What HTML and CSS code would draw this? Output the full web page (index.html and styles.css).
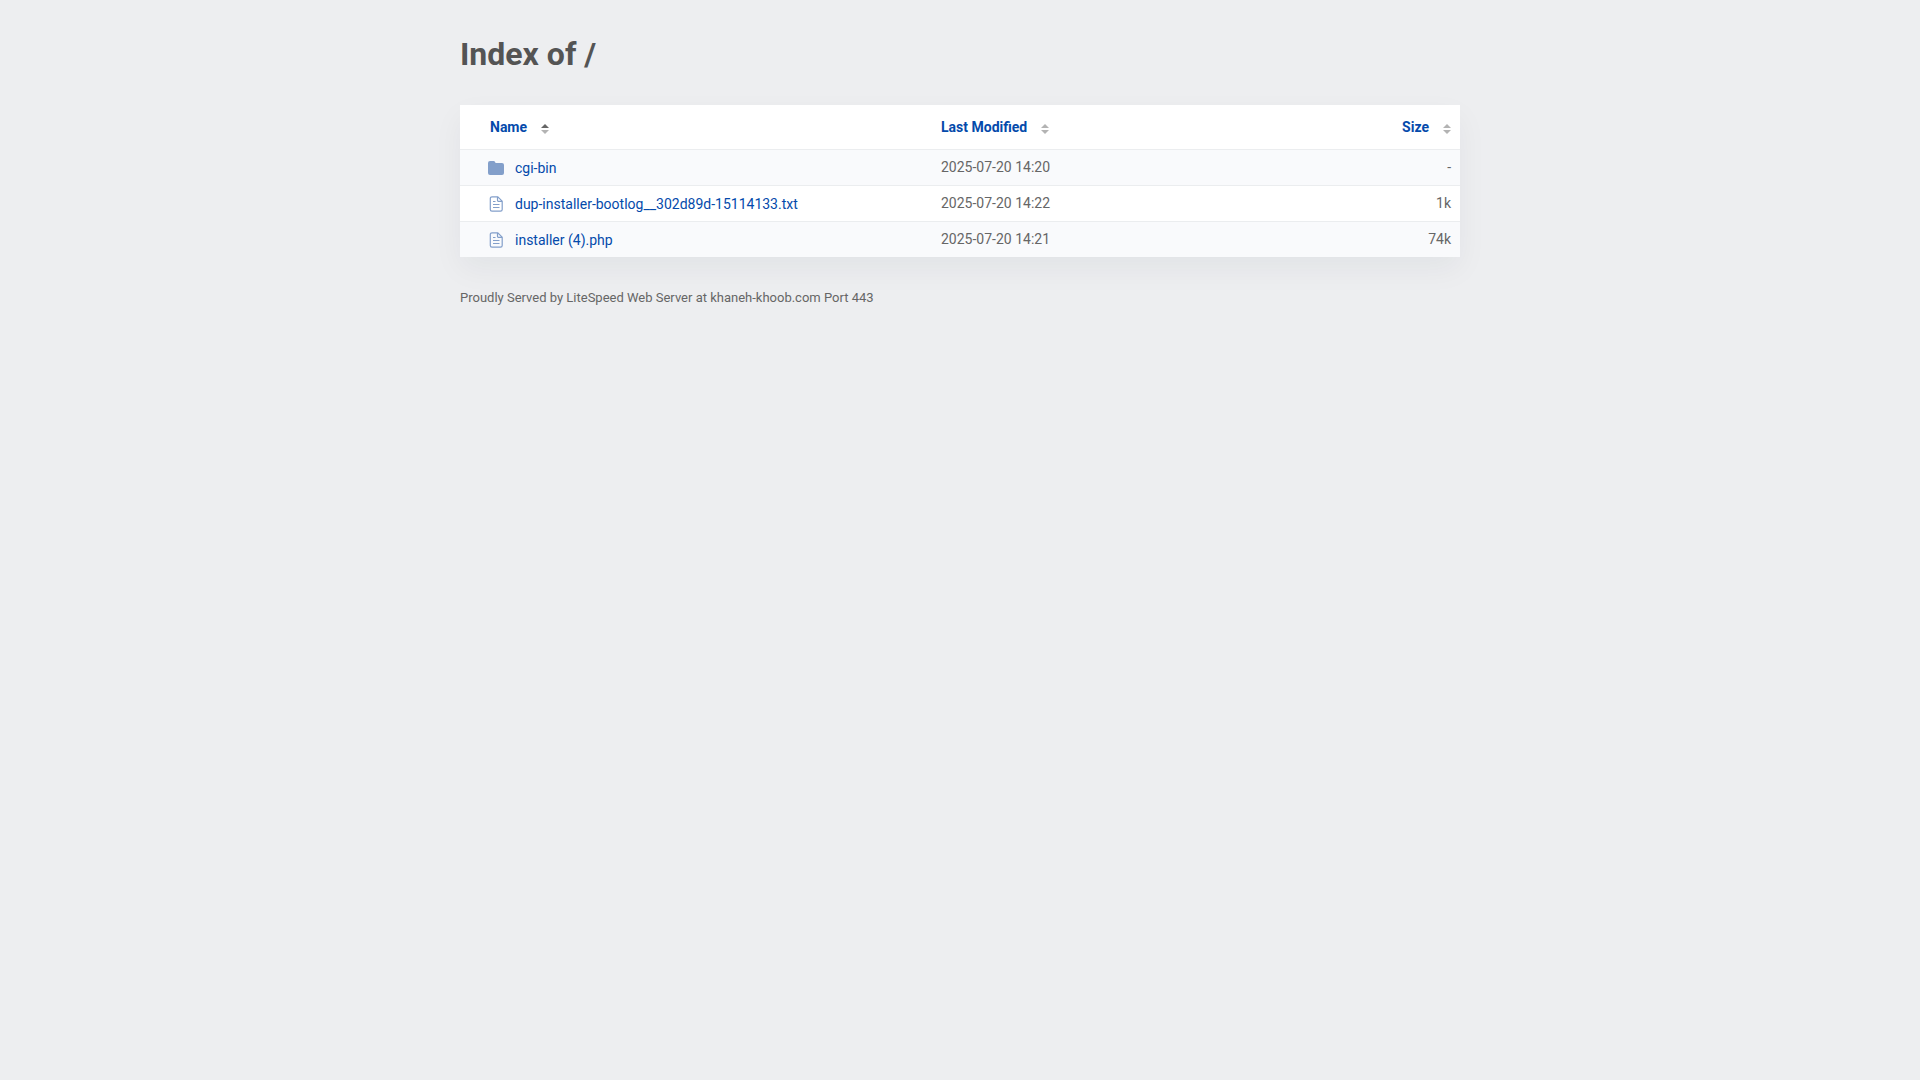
FILE: index.html
```
<!DOCTYPE html>
<html lang="en">

<head>
    <meta charset="UTF-8">
    <meta name="viewport" content="width=device-width, initial-scale=1.0">
    <title>Index of /</title>
    <link rel="stylesheet" href="styles.css">
</head>

<body>
    <!-- shared icons -->
    <svg class="icon-defs" aria-hidden="true">
        <symbol id="icon-folder" viewBox="0 0 16 16">
            <path d="M2 1h3.6c.5 0 .9.2 1.2.6L7.6 3H14a2 2 0 0 1 2 2v8a2 2 0 0 1-2 2H2a2 2 0 0 1-2-2V3a2 2 0 0 1 2-2z" />
        </symbol>
        <symbol id="icon-file" viewBox="0 0 16 16">
            <path d="M9.8.8H4A1.7 1.7 0 0 0 2.3 2.5v11A1.7 1.7 0 0 0 4 15.2h8.5a1.7 1.7 0 0 0 1.7-1.7V5.2zM9.5 1v3.2a1.2 1.2 0 0 0 1.2 1.2H14M5 5.5h2.5M5 8.5h6.5M5 11.5h6.5" fill="none" stroke="currentColor" stroke-width="1.2" />
        </symbol>
        <symbol id="icon-sort" viewBox="0 0 8 10">
            <path d="M0 4l4-4 4 4z" fill="currentColor" />
            <path d="M0 6l4 4 4-4z" />
        </symbol>
    </svg>

    <div class="content">
        <h1>Index of /</h1>
        <table>
            <thead>
                <tr>
                    <th class="name" aria-sort="ascending"><a href="#">Name<svg class="sort asc"><use href="#icon-sort" /></svg></a></th>
                    <th class="modified"><a href="#">Last Modified<svg class="sort"><use href="#icon-sort" /></svg></a></th>
                    <th class="size"><a href="#">Size<svg class="sort"><use href="#icon-sort" /></svg></a></th>
                </tr>
            </thead>
            <tbody>
                <tr>
                    <td class="name"><a href="#"><svg class="icon"><use href="#icon-folder" /></svg>cgi-bin</a></td>
                    <td>2025-07-20 14:20</td>
                    <td class="size">-</td>
                </tr>
                <tr>
                    <td class="name"><a href="#"><svg class="icon"><use href="#icon-file" /></svg>dup-installer-bootlog__302d89d-15114133.txt</a></td>
                    <td>2025-07-20 14:22</td>
                    <td class="size">1k</td>
                </tr>
                <tr>
                    <td class="name"><a href="#"><svg class="icon"><use href="#icon-file" /></svg>installer (4).php</a></td>
                    <td>2025-07-20 14:21</td>
                    <td class="size">74k</td>
                </tr>
            </tbody>
        </table>
        <footer>Proudly Served by LiteSpeed Web Server at khaneh-khoob.com Port 443</footer>
    </div>
</body>

</html>
```
FILE: styles.css
```
* {
    box-sizing: border-box;
}

body {
    margin: 0;
    padding: 16px;
    background-color: #edeef0;
    color: #666;
    font-family: Roboto, sans-serif;
    font-size: 14px;
    line-height: 20px;
}

.icon-defs {
    display: none;
}

.content {
    max-width: 1000px;
    margin: 0 auto;
}

h1 {
    margin: 18px 0 31px;
    color: #545454;
    font-size: 32px;
    font-weight: 700;
    line-height: 40px;
}

table {
    width: 100%;
    table-layout: fixed;
    border-collapse: separate;
    border-spacing: 0;
    background: #fff;
    box-shadow: 0 12px 28px rgba(0, 40, 50, 0.05);
}

th,
td {
    padding: 6px 9px 8px;
    text-align: left;
    font-weight: 400;
}

th {
    height: 44px;
    font-weight: 700;
}

td {
    height: 36px;
    border-top: 1px solid #ebedef;
}

tbody tr:nth-child(odd) {
    background: #f9fafc;
}

th.name {
    width: 472px;
    padding-left: 30px;
}

td.name {
    padding: 7px 9px 7px 28px;
}

th.size,
td.size {
    text-align: right;
}

a {
    display: inline-flex;
    align-items: center;
    color: #044aab;
    text-decoration: none;
    vertical-align: middle;
}

td a {
    display: flex;
}

a:hover {
    text-decoration: underline;
}

.icon {
    width: 16px;
    height: 16px;
    margin-right: 11px;
    color: #839fca;
    fill: #839fca;
}

.sort {
    width: 8px;
    height: 10px;
    margin: 4px 0 0 14px;
    color: #b3b3b3;
    fill: #b3b3b3;
}

.sort.asc {
    color: #666;
}

footer {
    margin-top: 31px;
    font-size: 13px;
}
```
